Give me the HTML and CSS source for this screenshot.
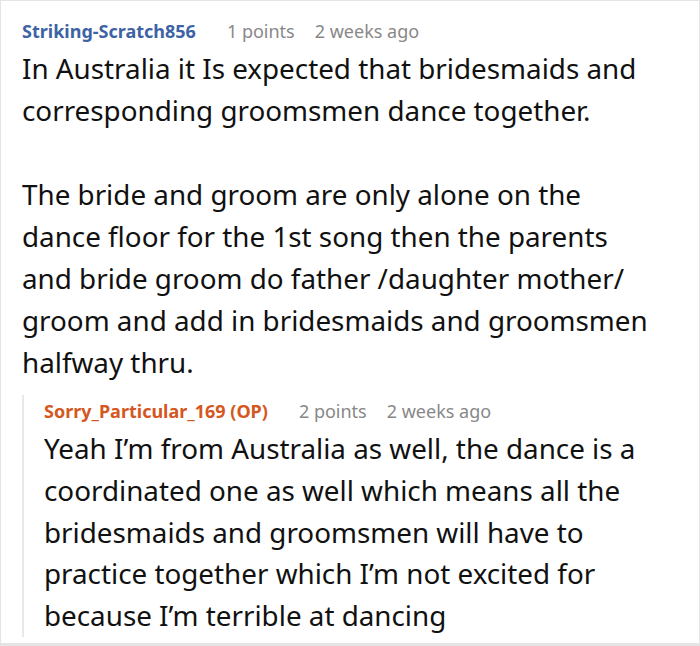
FILE: index.html
```html
<!DOCTYPE html>
<html>
<head>
<meta charset="utf-8">
<link rel="stylesheet" href="styles.css">
</head>
<body>
<div class="frame">
  <div class="comment">
    <div class="meta">
      <span class="author">Striking-Scratch856</span>
      <span class="info">1 points</span>
      <span class="info">2 weeks ago</span>
    </div>
    <div class="text">
      <p>In Australia it Is expected that bridesmaids and corresponding groomsmen dance together.</p>
      <p>The bride and groom are only alone on the dance floor for the 1st song then the parents and bride groom do father /daughter mother/ groom and add in bridesmaids and groomsmen halfway thru.</p>
    </div>
    <div class="reply">
      <div class="meta">
        <span class="author op">Sorry_Particular_169 (OP)</span>
        <span class="info">2 points</span>
        <span class="info">2 weeks ago</span>
      </div>
      <div class="text">
        <p>Yeah I’m from Australia as well, the dance is a coordinated one as well which means all the bridesmaids and groomsmen will have to practice together which I’m not excited for because I’m terrible at dancing</p>
      </div>
    </div>
  </div>
</div>
</body>
</html>
```
FILE: styles.css
```css
html, body {
  margin: 0;
  padding: 0;
  background: #fff;
}
.frame {
  width: 700px;
  height: 646px;
  box-sizing: border-box;
  border: 1px solid #e4e4e4;
  border-bottom-width: 3px;
  overflow: hidden;
}
.comment {
  padding: 14px 40px 0 21px;
  font-family: "Noto Sans", sans-serif;
}
.meta {
  display: flex;
  gap: 20px;
  font-size: 18px;
  line-height: 32px;
  color: #888;
  white-space: nowrap;
}
.author {
  color: #3e63a4;
  font-weight: bold;
  margin-right: 11px;
}
.author.op {
  color: #d4571f;
  margin-right: 11px;
}
.text {
  font-size: 27.8px;
  line-height: 42px;
  color: #111;
}
.text p {
  margin: 0 0 42px 0;
}
.text p:last-child {
  margin-bottom: 0;
}
.reply {
  margin-top: 27px;
  border-left: 2px solid #e8e8e8;
  padding-left: 20px;
}
.reply .meta {
  margin-top: -15px;
}
.reply .text {
  margin-top: 1px;
  line-height: 41.8px;
}
.reply .text p:last-child {
  margin-bottom: -10px;
}
```
